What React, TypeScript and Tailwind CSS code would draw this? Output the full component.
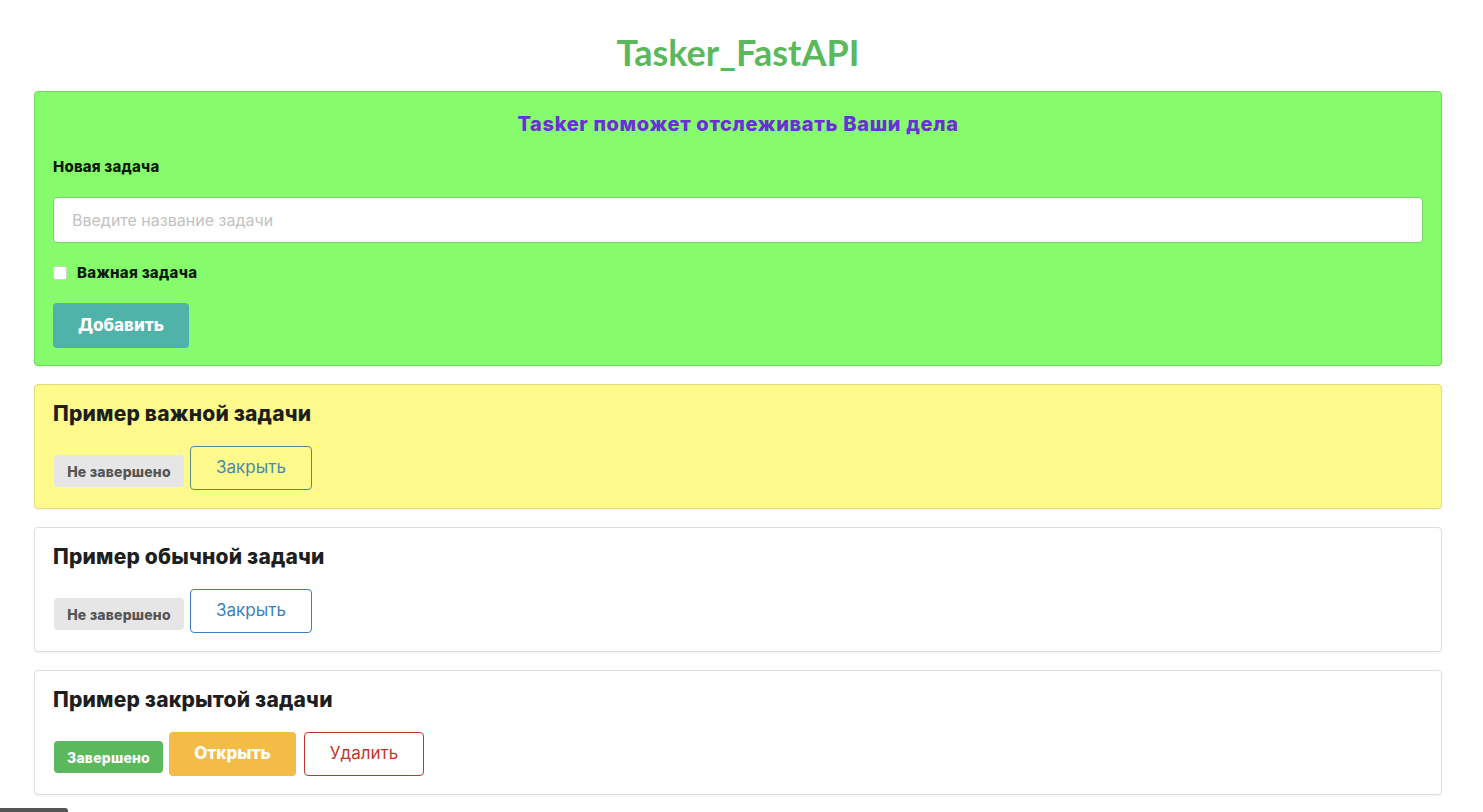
import React from 'react';

type Task = {
  id: number;
  title: string;
  important: boolean;
  done: boolean;
};

const tasks: Task[] = [
  { id: 1, title: 'Пример важной задачи', important: true, done: false },
  { id: 2, title: 'Пример обычной задачи', important: false, done: false },
  { id: 3, title: 'Пример закрытой задачи', important: false, done: true },
];

function TaskCard({ task }: { task: Task }) {
  return (
    <div
      className={`rounded-[4px] border px-[18px] pt-[15px] pb-[18px] shadow-[0_1px_2px_rgba(0,0,0,0.06)] ${
        task.important ? 'bg-[#fefa8c] border-[#e2dc80]' : 'bg-white border-[#dedede]'
      }`}
    >
      <h3 className="text-[21px] leading-[28px] font-extrabold text-[#1e1e1e] tracking-[0.2px]">{task.title}</h3>
      <div className="mt-[18px] flex items-center h-[44px]">
        {task.done ? (
          <>
            <span className="ml-px mt-[6px] h-[32px] w-[109px] flex items-center justify-center rounded-[4px] bg-[#5cb85c] text-white text-[14px] font-extrabold tracking-[0.2px]">
              Завершено
            </span>
            <button className="ml-[6px] h-[44px] w-[127px] rounded-[4px] bg-[#f2bc46] text-white text-[17px] font-extrabold">
              Открыть
            </button>
            <button className="ml-[8px] h-[44px] w-[120px] rounded-[4px] border border-[#c0392b] bg-white text-[#c0392b] text-[17px]">
              Удалить
            </button>
          </>
        ) : (
          <>
            <span className="ml-px mt-[6px] h-[32px] w-[130px] flex items-center justify-center rounded-[4px] bg-[#e6e6e6] text-[#555] text-[14px] font-extrabold tracking-[0.2px]">
              Не завершено
            </span>
            <button
              className={`ml-[6px] h-[44px] w-[122px] rounded-[4px] border text-[17px] ${
                task.important
                  ? 'border-[#4f8a8c] text-[#4a89a6] bg-transparent'
                  : 'border-[#3a7fc0] text-[#3a7fc0] bg-white'
              }`}
            >
              Закрыть
            </button>
          </>
        )}
      </div>
    </div>
  );
}

export default function App() {
  return (
    <div className="min-h-screen bg-white font-['Inter','Liberation_Sans',sans-serif]">
      <div className="ml-[34px] w-[1408px]">
        <h1 className="pt-[25px] text-center text-[36px] leading-[54px] font-bold text-[#5cb85c] font-['Lato','Liberation_Sans',sans-serif]">
          Tasker_FastAPI
        </h1>

        <div className="mt-[12px] rounded-[4px] border border-[#73d65e] bg-[#86fb6c] px-[18px] pt-[18px] pb-[17px] shadow-[0_1px_2px_rgba(0,0,0,0.08)]">
          <h2 className="text-center text-[20px] leading-[28px] font-extrabold text-[#6a30d6] tracking-[0.65px]">
            Tasker поможет отслеживать Ваши дела
          </h2>
          <label className="mt-[19px] block text-[15px] leading-[20px] font-extrabold text-[#0d1a0a] tracking-[0.2px]">Новая задача</label>
          <input
            type="text"
            placeholder="Введите название задачи"
            className="mt-[20px] block w-full h-[46px] rounded-[4px] border border-[#7ad266] bg-white px-[18px] text-[16px] text-[#333] placeholder:text-[#c2c2c2] outline-none"
          />
          <div className="mt-[20px] flex items-center h-[20px]">
            <span className="w-[14px] h-[14px] rounded-[3px] bg-white border border-[#cfcfcf]" />
            <span className="ml-[10px] text-[15px] font-extrabold text-[#0d1a0a] tracking-[0.3px]">Важная задача</span>
          </div>
          <button className="mt-[20px] h-[45px] w-[136px] rounded-[4px] bg-[#4fb3aa] text-white text-[17px] font-extrabold">
            Добавить
          </button>
        </div>

        <div className="mt-[18px] flex flex-col gap-[18px]">
          {tasks.map((t) => (
            <TaskCard key={t.id} task={t} />
          ))}
        </div>
      </div>
      <div className="mt-[13px] h-[4px] w-[68px] rounded-tr-[3px] bg-[#555]" />
    </div>
  );
}
